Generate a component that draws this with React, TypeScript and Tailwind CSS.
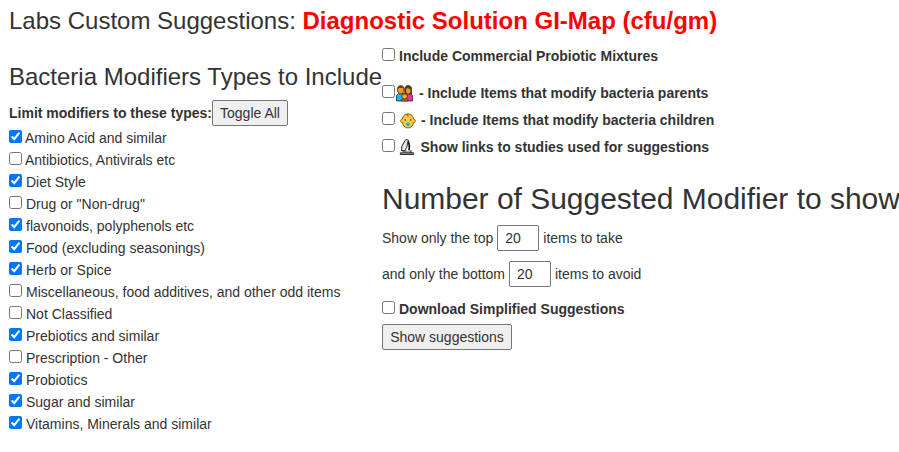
import type { ReactNode } from "react";

const modifierTypes = [
  { label: "Amino Acid and similar", on: true },
  { label: "Antibiotics, Antivirals etc", on: false },
  { label: "Diet Style", on: true },
  { label: 'Drug or "Non-drug"', on: false },
  { label: "flavonoids, polyphenols etc", on: true },
  { label: "Food (excluding seasonings)", on: true },
  { label: "Herb or Spice", on: true },
  { label: "Miscellaneous, food additives, and other odd items", on: false },
  { label: "Not Classified", on: false },
  { label: "Prebiotics and similar", on: true },
  { label: "Prescription - Other", on: false },
  { label: "Probiotics", on: true },
  { label: "Sugar and similar", on: true },
  { label: "Vitamins, Minerals and similar", on: true },
];

function Check({ on = false }: { on?: boolean }) {
  return <input type="checkbox" defaultChecked={on} className="m-0 mt-[3px] size-[13px] shrink-0" />;
}

function OptionRow({ className, children }: { className: string; children: ReactNode }) {
  return <label className={`flex h-[22px] items-start font-bold leading-[22px] ${className}`}>{children}</label>;
}

function FamilyIcon() {
  return (
    <svg width="17" height="17" viewBox="0 0 17 17" className="ml-[1px] mt-[3px] shrink-0">
      <path d="M.5 16V10.5L2.5 8.5h5l1 2V16z" fill="#12b9f0" stroke="#181818" strokeWidth=".7" />
      <path d="M8.5 16v-5.5l1.2-2h4.8l2 2V16z" fill="#e8388a" stroke="#181818" strokeWidth=".7" />
      <path d="M1.4 4.2C1.4 1.8 2.6.6 4.7.6S8 1.8 8 4.2C8 7 6.8 9 4.7 9S1.4 7 1.4 4.2z" fill="#f29a1f" stroke="#181818" strokeWidth=".7" />
      <path d="M8.8 9V4.2C8.8 1.8 10.2.6 12.2.6s3.4 1.2 3.4 3.6V9z" fill="#6b3d1c" stroke="#181818" strokeWidth=".7" />
      <path d="M1.6 4.4C1.5 2 2.8.9 4.7.9s3.2 1.1 3.1 3.5L6.6 3H3z" fill="#6b3d1c" />
      <path d="M9.9 4.8 11.5 3l3 1.7c0 2.5-.8 4.1-2.3 4.1s-2.3-1.7-2.3-4z" fill="#f29a1f" />
      <path d="M5.3 16v-1.4l1.7-1h3.2l1.7 1V16z" fill="#f4581c" stroke="#181818" strokeWidth=".6" />
      <circle cx="8.6" cy="11.2" r="2.8" fill="#ffb02b" stroke="#181818" strokeWidth=".7" />
      <path d="M6.1 10.7c.3-2.5 4.6-2.6 5 0L8.9 9.8z" fill="#c75b18" />
    </svg>
  );
}

function BabyIcon() {
  return (
    <svg width="16" height="16" viewBox="0 0 16 16" className="mt-[4px] shrink-0">
      <path d="M8 .8c3.1 0 5.2 2.2 5.6 5.3 1.2-.1 1.8.8 1.8 1.8s-.7 1.8-1.9 1.8c-.6 3.3-2.7 5.3-5.5 5.3s-4.9-2-5.5-5.3C1.3 9.7.6 8.9.6 7.9s.6-1.9 1.8-1.8C2.8 3 4.9.8 8 .8z" fill="#ffc83d" stroke="#584313" strokeWidth=".75" />
      <path d="M7.4 1c-.7 1.3.1 2.3 1.4 1.7" fill="none" stroke="#755012" strokeWidth=".9" />
      <circle cx="5.2" cy="7" r=".75" fill="#3b2c0b" />
      <circle cx="10.8" cy="7" r=".75" fill="#3b2c0b" />
      <ellipse cx="8" cy="10.7" rx="2.4" ry="1.5" fill="#54c9ed" />
      <circle cx="8" cy="11.6" r="1.6" fill="#18a9df" />
    </svg>
  );
}

function MicroscopeIcon() {
  return (
    <svg width="16" height="18" viewBox="0 0 16 18" className="mt-[2px] shrink-0">
      <path d="M8.6 2.2c1.8 2.9 2.1 6 1.4 10.2" fill="none" stroke="#151515" strokeWidth="1.7" />
      <path d="m2.4 12.8.5-4.5L6.2 2.2l2-.8 1 1.3-1.5 6.8-2.2 3.3z" fill="#d9d9d9" stroke="#181818" strokeWidth=".9" />
      <path d="m5.2 5.8 2 1-1.8 5.5-1.8-.4z" fill="#f3f3f3" />
      <path d="M4 13h8v1.7H4z" fill="#83bfc1" />
      <path d="M3.2 12.8h4.2M12 12v3" stroke="#181818" strokeWidth=".9" />
      <path d="M1.3 14.8h13.1v1.7H1.3z" fill="#aaa" stroke="#181818" strokeWidth=".9" />
    </svg>
  );
}

export default function App() {
  return (
    <main className="h-[452px] w-[899px] overflow-hidden bg-white pl-[9px] font-['Liberation_Sans',Arial,sans-serif] text-sm text-[#333]">
      <h1 className="h-[47px] whitespace-nowrap pt-[8px] text-2xl leading-[26px]">
        Labs Custom Suggestions: <b className="text-[#f00]">Diagnostic Solution GI-Map (cfu/gm)</b>
      </h1>
      <div className="flex items-start whitespace-nowrap">
        <section className="w-[373px] shrink-0 pt-[17px]">
          <h2 className="text-2xl leading-[26px]">Bacteria Modifiers Types to Include</h2>
          <div className="mt-[10px] flex h-[26px] items-center">
            <b className="w-[203px]">Limit modifiers to these types:</b>
            <button className="h-[26px] w-[76px] rounded-[2px] border border-[#767676] bg-[#efefef]">Toggle All</button>
          </div>
          <div className="mt-px">
            {modifierTypes.map(({ label, on }) => (
              <label key={label} className={`flex h-[22px] items-start leading-[22px] ${label.startsWith("A") ? "gap-[3px]" : "gap-[4px]"}`}>
                <Check on={on} />
                <span>{label}</span>
              </label>
            ))}
          </div>
        </section>
        <section className="-mt-[2px] w-[517px] shrink-0">
          <OptionRow className="gap-[4px]"><Check />Include Commercial Probiotic Mixtures</OptionRow>
          <OptionRow className="mt-[15px]"><Check /><FamilyIcon /><span className="ml-[6px]">- Include Items that modify bacteria parents</span></OptionRow>
          <OptionRow className="mt-[5px]"><Check /><span className="ml-[5px] flex"><BabyIcon /></span><span className="ml-[5px]">- Include Items that modify bacteria children</span></OptionRow>
          <OptionRow className="mt-[5px]"><Check /><span className="ml-[4px] flex"><MicroscopeIcon /></span><span className="ml-[5.5px]">Show links to studies used for suggestions</span></OptionRow>
          <h2 className="mt-[24px] text-[30px] leading-[33px] tracking-[-0.02px]">Number of Suggested Modifier to show</h2>
          <div className="mt-[10px] flex h-[26px] items-center gap-[4px]">
            <span>Show only the top</span>
            <input defaultValue="20" className="h-[26px] w-[42px] rounded-[2px] border border-[#767676] px-[7px]" />
            <span>items to take</span>
          </div>
          <div className="mt-[10px] flex h-[26px] items-center gap-[4px]">
            <span>and only the bottom</span>
            <input defaultValue="20" className="h-[26px] w-[42px] rounded-[2px] border border-[#767676] px-[7px]" />
            <span>items to avoid</span>
          </div>
          <OptionRow className="mt-[11px] gap-[4px]"><Check />Download Simplified Suggestions</OptionRow>
          <button className="mt-[4px] h-[26px] w-[130px] rounded-[2px] border border-[#767676] bg-[#efefef]">Show suggestions</button>
        </section>
      </div>
    </main>
  );
}
